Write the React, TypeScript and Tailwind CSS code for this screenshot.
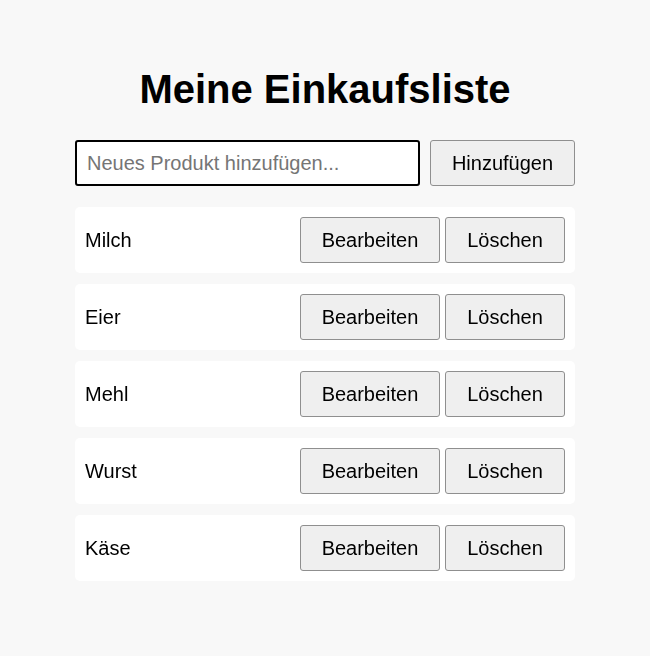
import { useState } from "react";

const initialItems = ["Milch", "Eier", "Mehl", "Wurst", "Käse"];

export default function App() {
  const [items, setItems] = useState<string[]>(initialItems);
  const [text, setText] = useState("");

  const add = () => {
    if (!text.trim()) return;
    setItems([...items, text.trim()]);
    setText("");
  };

  return (
    <div className="min-h-screen bg-[#f8f8f8] pt-[66px] font-['Liberation_Sans',Arial,sans-serif] text-black">
      <div className="w-[500px] mx-auto">
        {/* TITLE */}
        <h1 className="text-[40px] leading-[46px] font-bold text-center mb-[28px]">Meine Einkaufsliste</h1>

        {/* INPUT ROW */}
        <div className="flex gap-[10px] h-[46px]">
          <input
            autoFocus
            value={text}
            onChange={(e) => setText(e.target.value)}
            placeholder="Neues Produkt hinzufügen..."
            className="w-[345px] h-full border-2 border-black rounded-[3px] bg-white px-[10px] text-[20px] placeholder:text-[#757575] outline-none"
          />
          <button
            onClick={add}
            className="flex-1 h-full border border-[#8f8f8f] rounded-[3px] bg-[#efefef] text-[20px]"
          >
            Hinzufügen
          </button>
        </div>

        {/* LIST */}
        <ul className="mt-[21px] flex flex-col gap-[11px]">
          {items.map((item, index) => (
            <li
              key={index}
              className="h-[66px] bg-white rounded-[5px] px-[10px] flex items-center justify-between text-[20px]"
            >
              <span>{item}</span>
              <div className="flex gap-[5px]">
                <button className="w-[140px] h-[46px] border border-[#8f8f8f] rounded-[3px] bg-[#efefef] text-[20px]">
                  Bearbeiten
                </button>
                <button
                  onClick={() => setItems(items.filter((_, i) => i !== index))}
                  className="w-[120px] h-[46px] border border-[#8f8f8f] rounded-[3px] bg-[#efefef] text-[20px]"
                >
                  Löschen
                </button>
              </div>
            </li>
          ))}
        </ul>
      </div>
    </div>
  );
}
